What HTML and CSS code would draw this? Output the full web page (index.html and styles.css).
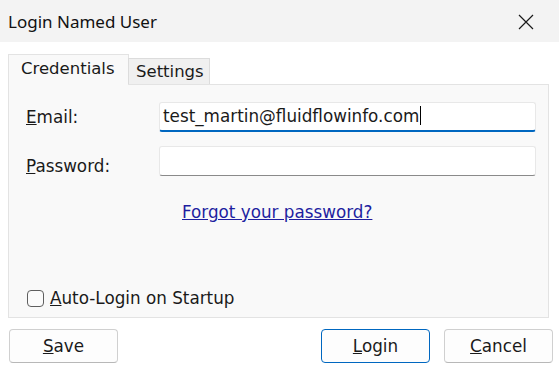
FILE: index.html
```html
<!DOCTYPE html>
<html>
<head>
<meta charset="utf-8">
<link rel="stylesheet" href="styles.css">
</head>
<body>
<div class="dialog">
  <div class="titlebar">
    <span class="title">Login Named User</span>
    <svg class="close" width="16" height="16" viewBox="0 0 16 16"><path d="M1 1 L15 15 M15 1 L1 15" stroke="#1a1a1a" stroke-width="1.2" fill="none"/></svg>
  </div>
  <div class="body">
    <div class="tabs">
      <div class="tab active">Credentials</div>
      <div class="tab">Settings</div>
    </div>
    <div class="panel">
      <div class="form">
        <label class="lbl"><u>E</u>mail:</label>
        <div class="input focused"><span>test_martin@fluidflowinfo.com</span><span class="caret"></span></div>
        <label class="lbl low"><u>P</u>assword:</label>
        <div class="input"></div>
      </div>
      <a class="link">Forgot your password?</a>
      <div class="check"><span class="box"></span><span><u>A</u>uto-Login on Startup</span></div>
    </div>
    <div class="buttons">
      <button class="btn"><u>S</u>ave</button>
      <div class="spacer"></div>
      <button class="btn default"><u>L</u>ogin</button>
      <button class="btn"><u>C</u>ancel</button>
    </div>
  </div>
</div>
</body>
</html>
```
FILE: styles.css
```css
* { box-sizing: border-box; }
html, body { margin: 0; padding: 0; }
body { width: 559px; height: 370px; background: #ffffff; font-family: "DejaVu Sans", Verdana, sans-serif; font-size: 16.8px; color: #1a1a1a; overflow: hidden; }
.dialog { width: 559px; height: 370px; display: flex; flex-direction: column; }
.titlebar { height: 42px; background: #f3f3f3; display: flex; align-items: center; justify-content: space-between; padding: 0 25px 0 8px; }
.title { font-family: "Noto Sans", "Open Sans", sans-serif; font-size: 17px; color: #111; }
.close { display: block; margin-top: 1px; }
.body { padding: 12px 8px 0 8px; display: flex; flex-direction: column; }
.tabs { display: flex; align-items: flex-end; height: 30px; position: relative; z-index: 1; font-size: 16.5px; }
.tab { height: 26px; padding: 0 5px 0 7px; display: flex; align-items: center; border: 1px solid #dcdcdc; border-bottom: none; background: #f0f0f0; margin-left: -1px; }
.tab.active { height: 31px; margin-bottom: -1px; margin-left: 0; background: #f9f9f9; padding: 0 8px 4px 12px; width: 121px; border-color: #e3e3e3; }
.panel { width: 541px; height: 234px; border: 1px solid #e3e3e3; background: #f9f9f9; display: flex; flex-direction: column; padding: 17px 12px 0 17px; }
.form { display: grid; grid-template-columns: 133px 377px; row-gap: 13px; align-items: center; }
.lbl { color: #1a1a1a; }
.lbl.low { padding-top: 11px; }
.input { height: 30px; background: #fff; border: 1px solid #e8e8e8; border-bottom: 1px solid #8a8a8a; border-radius: 3px; display: flex; align-items: center; padding: 0 3px 2px 3px; }
.input.focused { border-bottom: 2px solid #0067c0; height: 30px; }
.caret { display: inline-block; width: 1px; height: 19px; background: #000; margin-left: 1px; }
.link { align-self: flex-start; margin: 26px 0 0 156px; color: #1e1ea0; text-decoration: underline; }
.check { display: flex; align-items: center; margin-top: 66px; margin-left: 1px; gap: 6px; }
.box { width: 17px; height: 17px; border: 1px solid #5f5f5f; border-radius: 4px; background: #fbfbfb; }
.buttons { display: flex; margin-top: 11px; padding-left: 1px; margin-right: -2px; }
.spacer { flex: 1; }
.btn { width: 109px; height: 34px; font-family: inherit; font-size: 16.8px; color: #1a1a1a; background: #fdfdfd; border: 1px solid #d0d0d0; border-bottom-color: #b8b8b8; border-radius: 4px; padding: 0; }
.btn.default { border: 1px solid #0067c0; margin-right: 14px; }
```
